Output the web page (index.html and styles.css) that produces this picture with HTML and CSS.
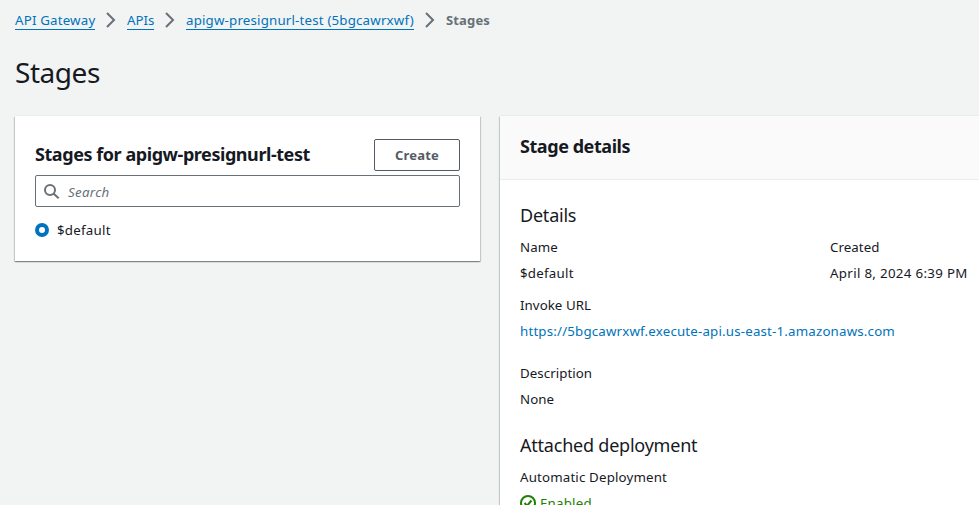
FILE: index.html
```html
<!DOCTYPE html>
<html lang="en">
<head>
<meta charset="utf-8">
<title>Stages</title>
<link rel="stylesheet" href="styles.css">
</head>
<body>
<nav class="crumbs">
<a class="crumb c1">API Gateway</a>
<svg class="chev" viewBox="0 0 16 16"><path d="M4 1l7 7-7 7"/></svg>
<a class="crumb c2">APIs</a>
<svg class="chev" viewBox="0 0 16 16"><path d="M4 1l7 7-7 7"/></svg>
<a class="crumb c3">apigw-presignurl-test (5bgcawrxwf)</a>
<svg class="chev" viewBox="0 0 16 16"><path d="M4 1l7 7-7 7"/></svg>
<span class="current">Stages</span>
</nav>
<h1 class="title">Stages</h1>
<main class="layout">
<section class="panel list">
<div class="list-head"><h2>Stages for apigw-presignurl-test</h2><button class="create">Create</button></div>
<div class="search"><svg class="glass" viewBox="0 0 16 16"><circle cx="6" cy="6" r="5"/><path d="M9.7 9.7l5 4.6"/></svg><span>Search</span></div>
<div class="option"><span class="radio"></span><span class="wide">$default</span></div>
</section>
<section class="panel details">
<header class="details-head"><h2>Stage details</h2></header>
<div class="details-body">
<h3>Details</h3>
<div class="columns">
<div class="field"><span>Name</span><span class="wide">$default</span></div>
<div class="field"><span>Created</span><span class="date">April 8, 2024 6:39 PM</span></div>
</div>
<div class="field url"><span>Invoke URL</span><a>https://5bgcawrxwf.execute-api.us-east-1.amazonaws.com</a></div>
<div class="field desc"><span>Description</span><span>None</span></div>
<h3 class="second">Attached deployment</h3>
<div class="field"><span class="auto">Automatic Deployment</span><span class="enabled"><svg class="check" viewBox="0 0 16 16"><circle cx="8" cy="8" r="7"/><path d="M4.5 8l2.6 2.7L11.5 5.5"/></svg>Enabled</span></div>
</div>
</section>
</main>
</body>
</html>
```
FILE: styles.css
```css
* { box-sizing: border-box; }
body { margin: 0; height: 505px; overflow: hidden; background: #f2f3f3; color: #16191f; font: 13.3px/20px "Noto Sans", sans-serif; }
h1, h2, h3 { margin: 0; }
.crumbs { display: flex; align-items: flex-start; height: 30px; padding: 10px 0 0 15px; }
.crumb { flex: none; height: 20px; color: #0073bb; border-bottom: 1px solid #0073bb; white-space: nowrap; letter-spacing: .18px; }
.c1 { width: 80px; }
.c2 { width: 27px; letter-spacing: 0; }
.c3 { width: 228px; }
.chev { flex: none; width: 16px; height: 16px; margin: 2px 8px 0; fill: none; stroke: #687078; stroke-width: 2; }
.current { color: #687078; font-size: 13px; font-weight: 700; letter-spacing: .15px; }
.title { height: 86px; padding: 25px 0 0 15px; font-size: 28px; line-height: 34px; font-weight: 400; letter-spacing: -.45px; }
.layout { display: flex; align-items: flex-start; gap: 20px; padding-left: 15px; }
.panel { background: #fff; box-shadow: 0 1px 1px rgba(0,28,36,.3), 1px 1px 1px rgba(0,28,36,.15), -1px 1px 1px rgba(0,28,36,.15), 0 -1px 0 #eaeded; }
.list { flex: none; width: 465px; height: 145px; padding: 23px 20px 0; }
h2 { font-size: 18px; line-height: 22px; font-weight: 700; letter-spacing: -.44px; white-space: nowrap; }
.list-head { display: flex; justify-content: space-between; height: 36px; }
.list-head h2 { padding-top: 4px; }
.create { width: 86px; height: 32px; padding: 0; border: 1px solid #545b64; border-radius: 2px; background: #fff; color: #545b64; font: 700 13px/20px "Noto Sans", sans-serif; letter-spacing: .2px; }
.search { display: flex; align-items: center; gap: 8px; height: 32px; padding: 2px 0 0 8px; border: 1px solid #687078; border-radius: 2px; color: #687078; font-style: italic; letter-spacing: .3px; }
.glass { width: 16px; height: 16px; fill: none; stroke: #687078; stroke-width: 2; }
.option { display: flex; align-items: center; gap: 8px; padding-top: 13px; }
.radio { width: 14px; height: 14px; border: 4px solid #0073bb; border-radius: 50%; }
.wide { letter-spacing: .24px; }
.details { flex: 1; min-width: 0; height: 389px; }
.details-head { height: 64px; padding: 19px 20px 0; background: #fafafa; border-bottom: 1px solid #eaeded; }
.details-body { padding: 24px 0 0 20px; }
h3 { height: 23px; font-size: 18px; line-height: 22px; font-weight: 400; letter-spacing: -.22px; }
.columns { display: grid; grid-template-columns: 310px 1fr; }
.field { display: flex; flex-direction: column; gap: 6px; padding-top: 10px; letter-spacing: .05px; white-space: nowrap; }
.field a { color: #0073bb; letter-spacing: .18px; }
.date { letter-spacing: .32px; }
.auto { letter-spacing: .16px; }
.url { padding-top: 12px; }
.desc { padding-top: 22px; }
.second { padding-top: 25px; height: 48px; }
.enabled { display: flex; align-items: center; gap: 4px; color: #1d8102; letter-spacing: .2px; }
.check { width: 16px; height: 16px; fill: none; stroke: #1d8102; stroke-width: 2; }
```
